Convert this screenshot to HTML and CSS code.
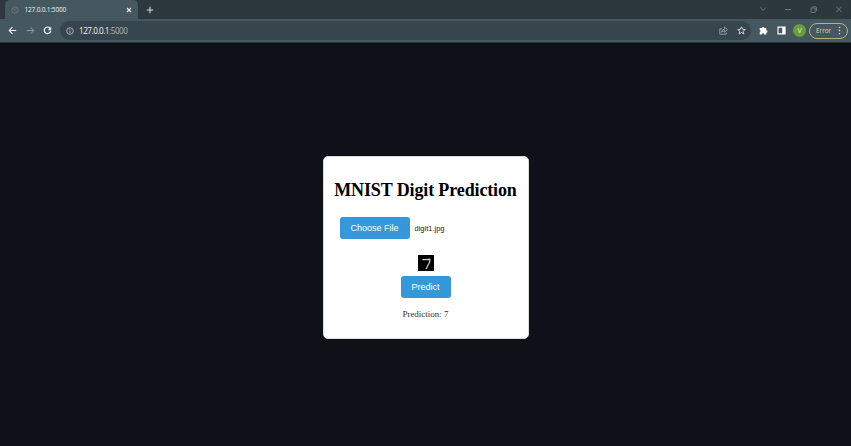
FILE: index.html
```html
<!DOCTYPE html>
<html lang="en">
<head>
<meta charset="utf-8">
<title>127.0.0.1:5000</title>
<link rel="stylesheet" href="styles.css">
</head>
<body>
<header class="browser">
  <div class="tabs">
    <div class="tab">
      <svg class="favicon" width="8" height="8" viewBox="0 0 8 8"><circle cx="4" cy="4" r="3.3" fill="none" stroke="#6b7074" stroke-width=".9"/><path d="M1 2.5l2 .4 1 1.4-1 .8M4 1l.5 1.3 2.3.7M5 5.6l1.5-.8" fill="none" stroke="#6b7074" stroke-width="1"/></svg>
      <span class="tab-title">127.0.0.1:5000</span>
      <svg width="6" height="6" viewBox="0 0 6 6"><path d="M1 1l4 4M5 1L1 5" stroke="#eef1f2" stroke-width="1.1"/></svg>
    </div>
    <svg class="new-tab" width="8" height="8" viewBox="0 0 8 8"><path d="M4 .8v6.4M.8 4h6.4" stroke="#d5dadc" stroke-width="1.1"/></svg>
    <div class="window-controls">
      <svg width="8" height="8" viewBox="0 0 8 8"><path d="M1.2 1.5L4 4.3l2.8-2.8"/></svg>
      <svg width="8" height="8" viewBox="0 0 8 8"><path d="M1 3.5h6"/></svg>
      <svg width="8" height="8" viewBox="0 0 8 8"><path d="M1 2h4.2v4.4H1zM2.6.8h2.9q1 0 1 1v3.1"/></svg>
      <svg width="8" height="8" viewBox="0 0 8 8"><path d="M1.2.6l5.6 5.6M6.8.6L1.2 6.2"/></svg>
    </div>
  </div>
  <div class="toolbar">
    <svg width="9" height="9" viewBox="0 0 9 9"><path d="M8.2 4.5H1.3M4.5 1.2L1.2 4.5l3.3 3.3" fill="none" stroke="#f2f4f5" stroke-width="1.1"/></svg>
    <svg width="9" height="9" viewBox="0 0 9 9"><path d="M.8 4.5h6.9M4.5 1.2l3.3 3.3-3.3 3.3" fill="none" stroke="#8d999f" stroke-width="1"/></svg>
    <svg class="reload" width="9" height="9" viewBox="0 0 9 9"><path d="M7.4 2.6A3.3 3.3 0 1 0 7.8 5" fill="none" stroke="#f2f4f5" stroke-width="1.2"/><path d="M8.2.8v3.4H4.8z" fill="#f2f4f5"/></svg>
    <div class="address">
      <svg width="8" height="8" viewBox="0 0 8 8"><circle cx="4" cy="4" r="3.3" fill="none" stroke="#bdc5c9" stroke-width=".8"/><path d="M4 3.6v2.3M4 2v.9" stroke="#bdc5c9" stroke-width=".9"/></svg>
      <span class="url">127.0.0.1<span class="port">:5000</span></span>
      <svg class="share" width="9" height="9" viewBox="0 0 9 9"><path d="M2.8 2.8H.8v5.4h6.4V6.7M2.5 6.1Q2.8 3.2 5.6 3.1V1l2.8 2.7-2.8 2.6V4.7Q3.8 4.7 2.5 6.1z" fill="none" stroke="#a5afb4" stroke-width=".8"/></svg>
      <svg width="9" height="9" viewBox="0 0 9 9"><path d="M4.5.8l1.1 2.5 2.7.2-2.1 1.8.7 2.7-2.4-1.5-2.4 1.5.7-2.7L.7 3.5l2.7-.2z" fill="none" stroke="#d2d8db" stroke-width=".95"/></svg>
    </div>
    <svg class="extensions" width="9" height="9" viewBox="0 0 9 9"><path d="M.7 2.1h2.2a1.2 1.2 0 1 1 2.4 0h2v2.1a1.2 1.2 0 1 1 0 2.4v1.9H5.2a1.2 1.2 0 0 0-2.4 0H.7V6.3a1.2 1.2 0 0 0 0-2.3z" fill="#fff"/></svg>
    <svg class="panel" width="9" height="9" viewBox="0 0 9 9"><path d="M1 1.1h7v6.8H1z" fill="none" stroke="#fff" stroke-width="1.1"/><path d="M5.2 1h3v7h-3z" fill="#fff"/></svg>
    <div class="avatar">V</div>
    <div class="error">Error<svg width="3" height="9" viewBox="0 0 3 9"><path d="M.8.7h1.4v1.4H.8zM.8 3.8h1.4v1.4H.8zM.8 6.9h1.4v1.4H.8z" fill="#e0d49b"/></svg></div>
  </div>
</header>
<main class="page">
  <section class="card">
    <h1>MNIST Digit Prediction</h1>
    <div class="file-row">
      <button class="button choose" type="button">Choose File</button>
      <span class="file-name">digit1.jpg</span>
    </div>
    <svg class="digit" width="16" height="16" viewBox="0 0 16 16"><path d="M0 0h16v16H0z" fill="#000"/><path d="M4.3 4.6h3l4.6-.3q.2 1.6-.9 4L8.1 14" fill="none" stroke="#c8c8c8" stroke-width="1.3"/></svg>
    <button class="button predict" type="button">Predict</button>
    <p class="result">Prediction: 7</p>
  </section>
</main>
</body>
</html>
```
FILE: styles.css
```css
* { box-sizing: border-box; }
body {
  margin: 0;
  height: 446px;
  display: flex;
  flex-direction: column;
  overflow: hidden;
  background: #0e1117;
}
svg { display: block; flex: none; }
.browser {
  flex: none;
  height: 43px;
  background: #455860;
  border-bottom: 1px solid #29343b;
  font-family: "Open Sans", "Noto Sans", sans-serif;
}
.tabs {
  display: flex;
  align-items: center;
  height: 19px;
  background: #2d383e;
}
.tab {
  display: flex;
  align-items: center;
  width: 133px;
  height: 19px;
  margin-left: 5px;
  padding: 0 6px;
  border-radius: 5px 5px 0 0;
  background: #455860;
}
.tab-title {
  flex: 1;
  margin-left: 5.5px;
  color: #eef1f2;
  font-size: 6.6px;
  letter-spacing: -.22px;
}
.new-tab { margin-left: 8px; }
.window-controls {
  display: flex;
  gap: 17.3px;
  margin-left: auto;
  padding-right: 8px;
  fill: none;
  stroke: #7c858a;
  stroke-width: .8;
}
.toolbar {
  display: flex;
  align-items: center;
  height: 23px;
  padding: 0 3px 0 8px;
}
.toolbar > svg { margin-right: 9px; }
.toolbar > .reload { margin-left: -1px; }
.address {
  display: flex;
  align-items: center;
  width: 692px;
  height: 19px;
  margin-left: -1px;
  padding: 0 5px 0 6px;
  border-radius: 10px;
  background: #37464e;
}
.url {
  margin-left: 5px;
  color: #f0f3f4;
  font-size: 8.2px;
  letter-spacing: -.5px;
}
.port { color: #aab4b9; }
.share { margin: 0 9px 0 auto; }
.toolbar > .extensions { margin-left: 8px; }
.toolbar > .panel { margin-right: 7px; }
.avatar {
  flex: none;
  width: 13px;
  height: 13px;
  border-radius: 50%;
  background: #679f38;
  color: #e2eed9;
  font-size: 7px;
  line-height: 13px;
  text-align: center;
}
.error {
  display: flex;
  flex: none;
  align-items: center;
  justify-content: space-between;
  width: 39px;
  height: 16px;
  margin-left: 3px;
  padding: 0 6px;
  border: 1px solid #b5b184;
  border-radius: 8px;
  color: #e0d49b;
  font-size: 6.4px;
}
.page {
  display: flex;
  flex: 1;
  align-items: flex-start;
  justify-content: center;
  padding-top: 113px;
}
.card {
  display: flex;
  flex-direction: column;
  align-items: center;
  width: 206px;
  height: 183px;
  border: 1px solid #d9dbdc;
  border-radius: 5px;
  background: #fff;
  font-family: "Liberation Serif", serif;
}
h1 {
  margin: 23px 0 0;
  color: #000;
  font-size: 18px;
  letter-spacing: -.13px;
  line-height: 20px;
  white-space: nowrap;
}
.file-row {
  display: flex;
  align-items: center;
  align-self: flex-start;
  margin: 17px 0 0 16px;
}
.button {
  height: 22px;
  padding: 0;
  border: 0;
  border-radius: 3px;
  background: #3498db;
  color: #fff;
  font: 9px "Liberation Sans", sans-serif;
}
.choose { width: 70px; }
.file-name {
  margin-left: 5px;
  color: #222;
  font: 7.5px "Liberation Sans", sans-serif;
}
.digit { margin-top: 16px; }
.predict { width: 50px; margin-top: 5px; }
.result {
  margin: 11px 0 0;
  color: #333;
  font-size: 9px;
  line-height: 11px;
}
```
